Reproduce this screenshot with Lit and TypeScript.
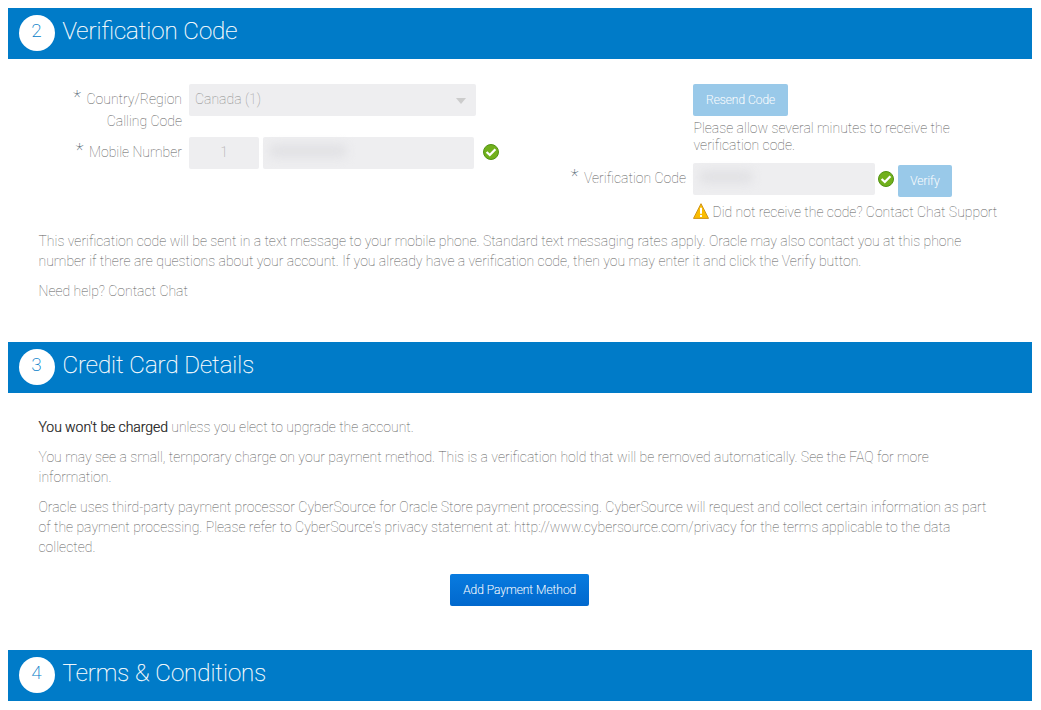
import { LitElement, html, css, svg } from "lit";
import { customElement, property } from "lit/decorators.js";

@customElement("section-header")
class SectionHeader extends LitElement {
  @property() step = "";
  @property() heading = "";
  static styles = css`
    :host { display: flex; height: 51px; background: #007bc8; padding-left: 11px; box-sizing: border-box; align-items: flex-start; }
    .badge { width: 36px; height: 36px; margin-top: 7px; border-radius: 50%; background: #fff; color: #007bc8; font-size: 19px; line-height: 32px; padding-right: 1px; box-sizing: border-box; text-align: center; font-weight: 200; }
    .title { margin: 0 0 0 7.5px; font-size: 24px; line-height: 47px; font-weight: 100; color: #fff; white-space: nowrap; -webkit-text-stroke: .25px #fff; }
  `;
  render() {
    return html`<div class="badge">${this.step}</div><h2 class="title">${this.heading}</h2>`;
  }
}

@customElement("status-icon")
class StatusIcon extends LitElement {
  @property() kind = "ok";
  static styles = css`:host { display: block; flex: none; width: 16px; height: 16px; } svg { display: block; }`;
  render() {
    return html`<svg width="16" height="16" viewBox="0 0 16 16">${this.kind === "ok"
      ? svg`<circle cx="8" cy="8" r="7.5" fill="#71b01c" stroke="#529314"/><path d="M3.6 8 6.8 11 12.4 5.3" fill="none" stroke="#fff" stroke-width="2.3"/>`
      : svg`<path d="M8 .7 15.5 15.4H.5Z" fill="#fbbd00" stroke="#cf9419" stroke-linejoin="round"/><path d="M8 4.8v6M8 12v2" stroke="#fff" stroke-width="2"/>`}</svg>`;
  }
}

@customElement("app-root")
class AppRoot extends LitElement {
  static styles = css`
    :host { display: block; box-sizing: border-box; width: 1041px; height: 710px; padding: 8px 9px 0 8px; overflow: hidden; background: #fff; color: #5c5c5c; font: 100 14px/20px Roboto, sans-serif; }
    .form { display: flex; height: 148px; padding-top: 25px; box-sizing: border-box; }
    .left { width: 555px; display: flex; flex-direction: column; gap: 9px; }
    .row { display: flex; }
    .country { height: 44px; }
    .label { display: flex; justify-content: flex-end; text-align: right; line-height: 22px; }
    .left .label { width: 174px; margin-right: 7px; height: 44px; padding-top: 4px; flex: none; }
    .left .mobile .label { height: 22px; }
    .right .label { width: 123px; margin-right: 7px; padding-top: 4px; white-space: nowrap; }
    .star { margin-right: 5.5px; font-size: 19px; color: #456; line-height: 18px; font-weight: 100; }
    .field { height: 32px; box-sizing: border-box; background: #eeeef0; border-radius: 2px; color: #8c8c8c; padding: 0 6px; line-height: 31px; }
    .select { width: 287px; display: flex; justify-content: space-between; align-items: flex-start; padding-right: 10px; }
    .arrow { margin-top: 14px; border: 5px solid transparent; border-top: 6px solid #ccc; border-bottom: 0; }
    .prefix { width: 70px; text-align: center; }
    .phone { width: 211px; margin-left: 4px; padding: 7px 6px; }
    .code { width: 182px; padding: 7px 6px; }
    .blurred { width: 78px; height: 14px; background: #e2e2e5; filter: blur(5px); border-radius: 6px; }
    .code .blurred { width: 54px; }
    .mobile status-icon { margin: 7px 0 0 9px; }
    .right { flex: 1; }
    .indent { padding-left: 130px; }
    .button { height: 32px; width: 95px; border-radius: 2px; background: #99c9e9; color: #fff; font-size: 12px; line-height: 32px; text-align: center; font-weight: 200; -webkit-text-stroke: .15px #fff; }
    .hint { margin-top: 4px; line-height: 17px; white-space: nowrap; padding-left: .5px; }
    .verify-row { margin-top: 9px; }
    .verify-row status-icon { margin: 8px 0 0 3px; }
    .verify { width: 54px; margin: 2px 0 0 4px; }
    .warning { display: flex; margin-top: 4px; white-space: nowrap; gap: 3.5px; line-height: 22px; }
    .warning status-icon { margin-top: 2px; }
    .copy { padding: 0 31px 0 30.5px; white-space: nowrap; }
    p { margin: 0 0 10px; }
    .card { height: 257px; padding-top: 24px; box-sizing: border-box; }
    .note { padding-top: 24px; height: 135px; box-sizing: border-box; }
    b { font-weight: 300; color: #222; letter-spacing: -.07px; -webkit-text-stroke: .2px #222; }
    .primary { width: 139px; margin: 17px auto 0; background: linear-gradient(#087bdf, #0168cd); }
  `;
  render() {
    return html`
      <section-header step="2" heading="Verification Code"></section-header>
      <div class="form">
        <div class="left">
          <div class="row country">
            <div class="label"><span class="star">*</span><span>Country/Region<br>Calling Code</span></div>
            <div class="field select"><span>Canada (1)</span><i class="arrow"></i></div>
          </div>
          <div class="row mobile">
            <div class="label"><span class="star">*</span><span>Mobile Number</span></div>
            <div class="field prefix">1</div><div class="field phone"><div class="blurred"></div></div>
            <status-icon></status-icon>
          </div>
        </div>
        <div class="right">
          <div class="indent"><div class="button">Resend Code</div><div class="hint">Please allow several minutes to receive the<br>verification code.</div></div>
          <div class="row verify-row">
            <div class="label"><span class="star">*</span><span>Verification Code</span></div>
            <div class="field code"><div class="blurred"></div></div><status-icon></status-icon><div class="button verify">Verify</div>
          </div>
          <div class="indent warning"><status-icon kind="warning"></status-icon><span>Did not receive the code? Contact Chat Support</span></div>
        </div>
      </div>
      <div class="copy note">
        <p>This verification code will be sent in a text message to your mobile phone. Standard text messaging rates apply. Oracle may also contact you at this phone<br>number if there are questions about your account. If you already have a verification code, then you may enter it and click the Verify button.</p>
        <p>Need help? Contact Chat</p>
      </div>
      <section-header step="3" heading="Credit Card Details"></section-header>
      <div class="copy card">
        <p><b>You won't be charged</b> unless you elect to upgrade the account.</p>
        <p>You may see a small, temporary charge on your payment method. This is a verification hold that will be removed automatically. See the FAQ for more<br>information.</p>
        <p>Oracle uses third-party payment processor CyberSource for Oracle Store payment processing. CyberSource will request and collect certain information as part<br>of the payment processing. Please refer to CyberSource's privacy statement at: http://www.cybersource.com/privacy for the terms applicable to the data<br>collected.</p>
        <div class="button primary">Add Payment Method</div>
      </div>
      <section-header step="4" heading="Terms &amp; Conditions"></section-header>
    `;
  }
}
